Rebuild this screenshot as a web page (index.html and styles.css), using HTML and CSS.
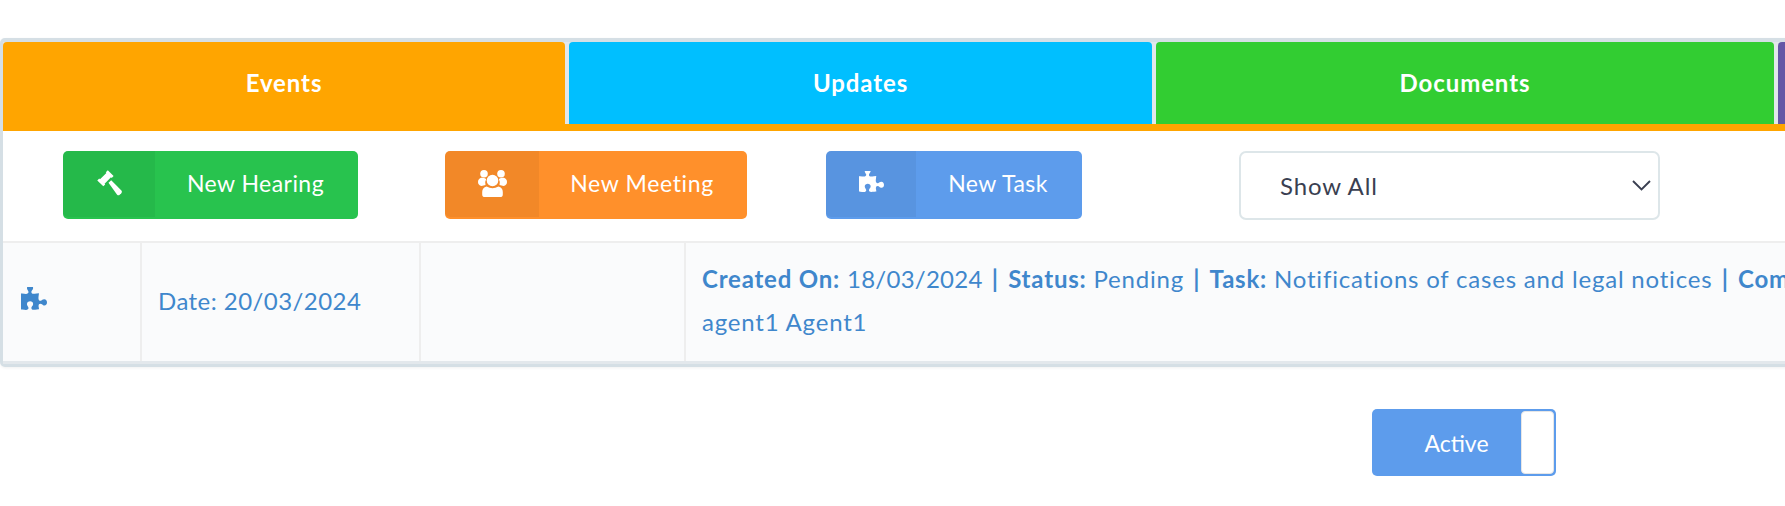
FILE: index.html
```html
<!DOCTYPE html>
<html lang="en">
<head>
<meta charset="utf-8">
<title>Case events</title>
<link rel="stylesheet" href="styles.css">
</head>
<body>
<svg class="defs" width="0" height="0" aria-hidden="true">
  <symbol id="puzzle" viewBox="0 256 1664 1300">
    <path fill="currentColor" d="M1664 1098q0 81-44.5 135t-123.5 54q-41 0-77.5-17.5t-59-38-56.5-38-71-17.5q-110 0-110 124 0 39 16 115t15 115v5q-22 0-33 1-34 3-97.5 11.5t-115.5 13.5-98 5q-61 0-103-26.5t-42-83.5q0-37 17.5-71t38-56.5 38-59 17.5-77.5q0-79-54-123.5t-135-44.5q-84 0-143 45.5t-59 127.5q0 43 15 83t33.5 64.5 33.5 53 15 50.5q0 45-46 89-37 35-117 35-95 0-245-24-9-2-27.5-4t-27.5-4l-13-2q-1 0-3-1-2 0-2-1v-1024q2 1 17.5 3.5t34 5 21.5 3.5q150 24 245 24 80 0 117-35 46-44 46-89 0-22-15-50.5t-33.5-53-33.5-64.5-15-83q0-82 59-127.5t144-45.5q80 0 134 44.5t54 123.5q0 41-17.5 77.5t-38 59-38 56.5-17.5 71q0 57 42 83.5t103 26.5q64 0 180-15t163-17v2q-1 2-3.5 17.5t-5 34-3.5 21.5q-24 150-24 245 0 80 35 117 44 46 89 46 22 0 50.5-15t53-33.5 64.5-33.5 83-15q82 0 127.5 59t45.5 143z"/>
  </symbol>
</svg>
<main class="panel">
  <nav class="tabs">
    <div class="tab tab-events">Events</div>
    <div class="tab tab-updates">Updates</div>
    <div class="tab tab-documents">Documents</div>
    <div class="tab tab-more"></div>
  </nav>
  <div class="toolbar">
    <button class="btn btn-green">
      <span class="btn-icon">
        <svg class="ico-gavel" viewBox="0 0 25 26"><g fill="currentColor"><path d="M0.3 10.4 L2.2 8.6 L3 9.3 L9.4 2.9 L8.8 2.2 L10.8 0.3 L16.6 6.1 L14.7 8 L14 7.3 L7.6 13.7 L8.2 14.5 L6.3 16.2 Z"/><path d="M11.5 12.8 L14.2 10.2 L24.4 20.6 Q25.4 21.9 24.3 23.2 L22.7 24.8 Q21.4 25.8 20.1 24.8 Z"/></g></svg>
      </span>
      <span class="btn-label">New Hearing</span>
    </button>
    <button class="btn btn-orange">
      <span class="btn-icon">
        <svg class="ico-users" viewBox="0 0 29 27"><g fill="currentColor"><circle cx="6" cy="3.8" r="3.8"/><circle cx="23" cy="3.8" r="3.8"/><path d="M3 7.8 Q0 9 0 12 Q0 15 3.5 16 L7.5 15 Q6.5 12 8.2 9 Q6 7.6 3 7.8Z"/><path d="M26 7.8 Q29 9 29 12 Q29 15 25.5 16 L21.5 15 Q22.5 12 20.8 9 Q23 7.6 26 7.8Z"/><circle cx="14.5" cy="10.5" r="5.8"/><path d="M7 27 Q4.2 27 4.2 24.4 L4.2 22 Q4.2 18 8.6 16.6 Q14.5 20 20.4 16.6 Q24.8 18 24.8 22 L24.8 24.4 Q24.8 27 22 27Z"/></g></svg>
      </span>
      <span class="btn-label">New Meeting</span>
    </button>
    <button class="btn btn-blue">
      <span class="btn-icon"><svg class="ico-puzzle"><use href="#puzzle"/></svg></span>
      <span class="btn-label">New Task</span>
    </button>
    <div class="select">
      <span>Show All</span>
      <svg class="chev" viewBox="0 0 19 11"><path d="M1 1 L9.5 9.5 L18 1" fill="none" stroke="currentColor" stroke-width="1.9"/></svg>
    </div>
  </div>
  <div class="row">
    <div class="cell cell-icon"><svg class="ico-puzzle"><use href="#puzzle"/></svg></div>
    <div class="cell cell-date">Date: 20/03/2024</div>
    <div class="cell cell-empty"></div>
    <div class="cell cell-info"><b>Created On:</b> <span class="num">18/03/2024</span> <b class="sep">|</b> <b>Status:</b> Pending <b class="sep">|</b> <b>Task:</b> Notifications of cases and legal notices <b class="sep">|</b> <b>Completed By:</b><br>agent1 Agent1</div>
  </div>
</main>
<div class="toggle">
  <span class="toggle-label">Active</span>
  <span class="toggle-knob"></span>
</div>
</body>
</html>
```
FILE: styles.css
```css
* { box-sizing: border-box; }
html, body { margin: 0; padding: 0; background: #fff; overflow: hidden; }
body {
  width: 1785px;
  height: 506px;
  padding-top: 38px;
  font-family: Lato, "Noto Sans", sans-serif;
  font-size: 18px;
}
.defs { display: block; position: absolute; }

.panel {
  width: 2100px;
  height: 329px;
  background: #fff;
  border: solid #d5dfe5;
  border-width: 4px 3px 3px 3px;
  border-radius: 5px;
  box-shadow: 0 1px 3px rgba(0, 0, 0, .06);
}

.tabs {
  display: flex;
  gap: 4px;
  height: 89px;
  background: #e2e7eb;
  border-bottom: 7px solid #ffa500;
}
.tab {
  display: flex;
  align-items: center;
  justify-content: center;
  color: #fff;
  font-weight: 700;
  font-size: 24px;
  letter-spacing: .9px;
  border-radius: 4px 4px 0 0;
  padding-bottom: 2px;
}
.tab-events { width: 562px; height: 89px; padding-bottom: 9px; background: #ffa500; }
.tab-updates { width: 583px; background: #00bfff; }
.tab-documents { width: 618px; background: #32cd32; }
.tab-more { width: 300px; background: #6457a6; }

.toolbar {
  display: flex;
  align-items: flex-start;
  height: 112px;
  padding: 20px 0 0 60px;
  background: #fff;
  border-bottom: 2px solid #eee;
}
.btn {
  display: flex;
  height: 68px;
  padding: 2px 0;
  border: 0;
  border-radius: 5px;
  color: #fff;
  font: inherit;
  font-size: 23px;
  letter-spacing: .45px;
}
.btn-icon {
  display: flex;
  align-items: center;
  justify-content: center;
  background: rgba(0, 0, 0, .05);
  border-radius: 5px 0 0 5px;
  margin-top: -2px;
  height: 66px;
  padding-bottom: 2px;
}
.btn-label { display: flex; align-items: center; justify-content: center; padding: 0 2px 4px 0; }
.btn-green { width: 295px; background: #28c34e; }
.btn-green .btn-icon { width: 92px; }
.btn-green .btn-label { width: 203px; }
.btn-orange { width: 302px; margin-left: 87px; background: #ff902b; letter-spacing: .65px; }
.btn-orange .btn-icon { width: 94px; }
.btn-orange .btn-label { width: 208px; }
.btn-blue { width: 256px; margin-left: 79px; background: #5d9cec; }
.btn-blue .btn-icon { width: 90px; padding-bottom: 4px; }
.btn-blue .btn-label { width: 166px; }

.ico-gavel { width: 25px; height: 26px; }
.ico-users { width: 29px; height: 27px; }
.ico-puzzle { width: 25px; height: 22px; }

.select {
  display: flex;
  align-items: center;
  justify-content: space-between;
  width: 421px;
  height: 69px;
  margin-left: 157px;
  padding: 0 7px 0 39px;
  border: 2px solid #dde6e9;
  border-radius: 7px;
  color: #3a3f51;
  font-size: 24px;
  letter-spacing: .85px;
}
.chev { width: 19px; height: 11px; }

.row {
  display: flex;
  height: 121px;
  background: #fafbfc;
  border-bottom: 3px solid #e3e8ec;
  color: #3f87cc;
  font-size: 24px;
}
.cell { border-right: 2px solid #eee; display: flex; align-items: center; padding-bottom: 4px; }
.cell-icon { width: 139px; padding-left: 18px; padding-bottom: 6px; }
.cell-icon .ico-puzzle { width: 26px; height: 25px; }
.cell-date { width: 279px; padding-left: 16px; letter-spacing: .45px; }
.cell-empty { width: 265px; }
.cell-info { display: block; flex: 1; padding: 14px 16px; line-height: 43px; border-right: 0; white-space: nowrap; letter-spacing: .8px; }
.num { letter-spacing: .25px; }
.sep { margin: 0 2.3px; }

.toggle {
  display: flex;
  align-items: stretch;
  width: 184px;
  height: 67px;
  margin: 42px 0 0 1372px;
  padding: 2px;
  background: #5d9cec;
  border-radius: 5px;
  color: #fff;
  font-size: 23px;
}
.toggle-label { flex: 1; display: flex; align-items: center; justify-content: center; padding-left: 18px; }
.toggle-knob { width: 33px; background: #fff; border-radius: 4px; border: 1px solid #e6e6e6; }
```
